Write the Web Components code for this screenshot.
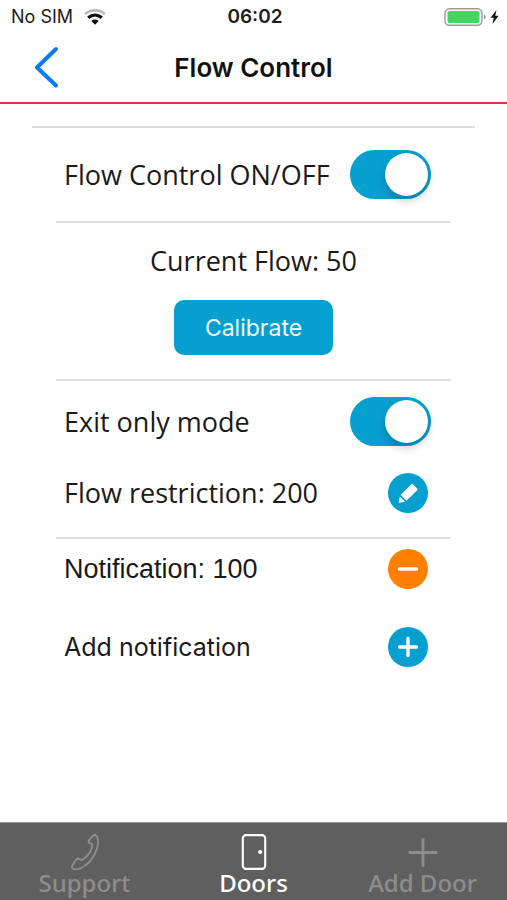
<!DOCTYPE html>
<html lang="en">
<head>
<meta charset="utf-8">
<meta name="viewport" content="width=device-width, initial-scale=1">
<title>Flow Control</title>
<style>
html, body { height: 100%; margin: 0; background: #fff; }
body { font-family: "Open Sans", "Noto Sans", sans-serif; color: #1a1a1a; }
</style>
</head>
<body>
<flow-app></flow-app>
<script>
const define = (name, html) => customElements.define(name, class extends HTMLElement {
  constructor() {
    super();
    this.attachShadow({ mode: "open" }).innerHTML = html(this);
  }
});

define("status-bar", () => `
<style>
:host { display: grid; grid-template-columns: 1fr auto 1fr; align-items: center; height: 34px; padding: 0 8px 0 11px; font: 18px/24px Inter, sans-serif; color: #1c1c1c; }
.net, .power { display: flex; align-items: center; }
.net { gap: 11px; }
.power { justify-content: flex-end; gap: 4px; }
time { font-size: 19px; font-weight: 600; }
svg { display: block; }
</style>
<span class="net"><span>No SIM</span>
<svg width="22" height="16" viewBox="0 0 22 16" fill="none" aria-hidden="true">
<path d="M1 5C6.600 .2 15.400 .2 21 5" stroke="#bbb" stroke-width="2.600"/>
<path d="M4.200 8.800C8.300 5.200 13.700 5.200 17.800 8.800" stroke="#111" stroke-width="3.200"/>
<path d="M7.300 12a5.400 5.400 0 0 1 7.400 0L11 15.800z" fill="#111"/></svg></span>
<time>06:02</time>
<span class="power">
<svg width="42" height="18" viewBox="0 0 42 18" aria-hidden="true">
<rect x="1" y=".8" width="37" height="16.400" rx="4.500" fill="#fff" stroke="#999" stroke-width="1.400"/>
<rect x="3.500" y="3" width="32" height="12" rx="2" fill="#43d65c"/>
<path d="M40 6.500c2 .8 2 4.200 0 5z" fill="#888"/></svg>
<svg width="9" height="16" viewBox="0 0 9 16" aria-hidden="true"><path d="M6.500 1 .5 8.800h3.300L2.500 15l6-8.200H5.200z" fill="#111"/></svg>
</span>`);

define("nav-header", () => `
<style>
:host { display: grid; grid-template-columns: 1fr auto 1fr; align-items: center; height: 68px; padding: 0 32px; border-bottom: 2px solid #c8413e; }
h1 { margin: 0; font: 600 26px/32px Inter, sans-serif; color: #111; }
button { justify-self: start; padding: 0; border: 0; background: none; cursor: pointer; }
svg { display: block; }
</style>
<button type="button" aria-label="Back"><svg width="28" height="44" viewBox="0 0 28 44" fill="none"><path d="M24 3 5 21.500 24 39.500" stroke="#087cf5" stroke-width="4" stroke-linecap="round" stroke-linejoin="round"/></svg></button>
<h1><slot></slot></h1>`);

define("setting-row", () => `
<style>
:host { display: flex; align-items: center; justify-content: space-between; gap: 16px; min-height: var(--row, 72px); padding: 0 23px 0 8px; font-size: 27px; line-height: 36px; }
:host([switch]) { padding-right: 20px; }
</style>
<slot></slot><slot name="action"></slot>`);

define("toggle-switch", el => `
<style>
:host { display: block; flex: none; }
input { appearance: none; display: flex; align-items: center; box-sizing: border-box; width: 81px; height: 49px; margin: 0; padding: 3px; border-radius: 25px; background: #bbb; cursor: pointer; }
input::before { content: ""; width: 43px; height: 43px; border-radius: 50%; background: #fff; box-shadow: 0 5px 8px rgba(0,0,0,.2); }
input:checked { justify-content: flex-end; background: #05a0d0; }
</style>
<input type="checkbox" role="switch" checked aria-label="${el.getAttribute("label")}">`);

const glyphs = {
  edit: `<path d="M23.200 11.300q.9-.8 1.800 0l4.100 4.100q.8.900 0 1.800L18.500 27.800 12.600 21.900z" fill="#fff"/><path d="M11.700 23.400l5.300 5.200-6.300 1.400z" fill="#fff"/>`,
  minus: `<path d="M11.500 20h17" stroke="#fff" stroke-width="3.400" stroke-linecap="round"/>`,
  plus: `<path d="M11.500 20h17M20 11.500v17" stroke="#fff" stroke-width="3.400" stroke-linecap="round"/>`
};
define("icon-button", el => `
<style>
:host { display: block; flex: none; }
button { display: block; width: 40px; height: 40px; padding: 0; border: 0; border-radius: 50%; background: var(--fill, #05a0d0); cursor: pointer; }
svg { display: block; }
</style>
<button type="button" aria-label="${el.getAttribute("label")}"><svg width="40" height="40" viewBox="0 0 40 40" fill="none">${glyphs[el.getAttribute("icon")]}</svg></button>`);

define("flow-meter", () => `
<style>
:host { display: flex; flex-direction: column; align-items: center; gap: 21px; padding: 20px 0 24px; font-size: 27px; line-height: 36px; }
button { padding: 13px 31px 11px; border: 0; border-radius: 10px; background: #05a0d0; color: #f2fbff; font: 23px/31px Inter, sans-serif; cursor: pointer; }
</style>
<slot></slot><button type="button">Calibrate</button>`);

const tabIcons = {
  support: `<path d="M26.500 1.500C28.500 3 29.800 5 29.800 8 29.800 20 21.500 33 10.500 37.500 7 38.600 3.500 38.300 2 36.500 1.500 35 6.500 28 8.300 26.800 9.500 26.300 10.500 28.500 12 28.500 17 27.500 24.500 17 23.500 12 23 10.500 20 11 19.700 9.300 19.600 7.500 24.500 2.500 26.500 1.500z" stroke-width="2"/>`,
  doors: `<rect x="4.200" y="2.200" width="23.600" height="35.600" rx="3.500" stroke-width="2.200"/><circle cx="22.500" cy="20" r="2.200" fill="currentColor" stroke="none"/>`,
  add: `<path d="M1 20.500h30M16 5.500v30" stroke-width="3"/>`
};
define("tab-item", el => `
<style>
:host { display: block; flex: 1; color: #8d8d8d; }
:host([current]) { color: #fff; }
a { display: flex; flex-direction: column; align-items: center; color: inherit; text-decoration: none; font: 500 24px/24px "Noto Sans", sans-serif; white-space: nowrap; }
svg { display: block; }
</style>
<a href="#${el.getAttribute("icon")}"><svg width="32" height="38" viewBox="0 0 32 40" fill="none" stroke="currentColor" aria-hidden="true">${tabIcons[el.getAttribute("icon")]}</svg><slot></slot></a>`);

define("tab-bar", () => `
<style>
:host { display: block; background: #5f5f5f; border-top: 1px solid #999; }
nav { display: flex; padding: 10px 0 5px; }
</style>
<nav><slot></slot></nav>`);

define("flow-app", () => `
<style>
:host { display: flex; flex-direction: column; min-height: 100%; }
main { flex: 1; padding: 22px 32px; }
.panel { border-top: 2px solid #dcdcdc; padding: 0 24px; }
section + section { border-top: 2px solid #dedede; }
.master { --row: 93px; }
.limits { padding: 5px 0 9px; --row: 71px; }
.alerts { padding-bottom: 8px; }
.alerts setting-row { --row: 78px; }
.alerts setting-row:first-child { --row: 60px; padding-bottom: 9px; }
.helvetica { font-family: "Liberation Sans", sans-serif; }
.inter { font-family: Inter, sans-serif; font-size: 25px; }
</style>
<status-bar></status-bar>
<nav-header>Flow Control</nav-header>
<main><div class="panel">
<section class="master"><setting-row switch><span>Flow Control ON/OFF</span><toggle-switch slot="action" label="Flow Control ON/OFF"></toggle-switch></setting-row></section>
<section><flow-meter><span>Current Flow: 50</span></flow-meter></section>
<section class="limits">
<setting-row switch><span>Exit only mode</span><toggle-switch slot="action" label="Exit only mode"></toggle-switch></setting-row>
<setting-row><span>Flow restriction: 200</span><icon-button slot="action" icon="edit" label="Edit flow restriction"></icon-button></setting-row>
</section>
<section class="alerts">
<setting-row class="helvetica"><span>Notification: 100</span><icon-button slot="action" icon="minus" label="Remove notification" style="--fill:#ff8000"></icon-button></setting-row>
<setting-row class="inter"><span>Add notification</span><icon-button slot="action" icon="plus" label="Add notification"></icon-button></setting-row>
</section>
</div></main>
<tab-bar>
<tab-item icon="support">Support</tab-item><tab-item icon="doors" current>Doors</tab-item><tab-item icon="add">Add Door</tab-item>
</tab-bar>`);
</script>
</body>
</html>
